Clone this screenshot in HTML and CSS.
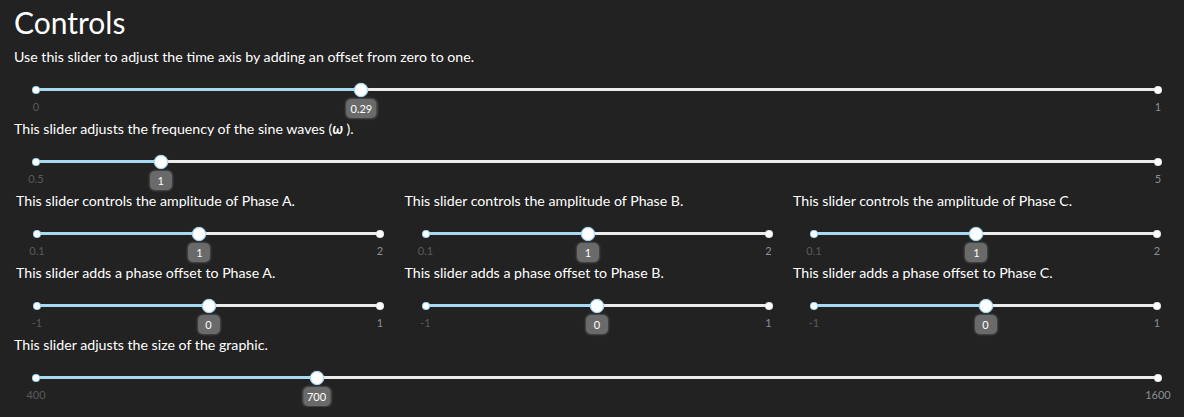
FILE: index.html
```html
<!DOCTYPE html>
<html>
<head>
<meta charset="utf-8">
<title>Controls</title>
<link rel="stylesheet" href="styles.css">
</head>
<body>
<div class="page">
  <h1 class="title">Controls</h1>

  <div class="block">
    <div class="label">Use this slider to adjust the time axis by adding an offset from zero to one.</div>
    <div class="slider wide">
      <div class="track"><div class="fill" style="width:29%"></div><span class="dot dot-l"></span><span class="dot dot-r"></span><span class="thumb" style="left:29%"></span></div>
      <div class="scale"><span class="min">0</span><span class="max">1</span></div>
      <span class="badge" style="left:29%">0.29</span>
    </div>
  </div>

  <div class="block">
    <div class="label">This slider adjusts the frequency of the sine waves (<b class="omega">ω</b> ).</div>
    <div class="slider wide">
      <div class="track"><div class="fill" style="width:11.11%"></div><span class="dot dot-l"></span><span class="dot dot-r"></span><span class="thumb" style="left:11.11%"></span></div>
      <div class="scale"><span class="min">0.5</span><span class="max">5</span></div>
      <span class="badge" style="left:11.11%">1</span>
    </div>
  </div>

  <div class="cols">
    <div class="block">
      <div class="label">This slider controls the amplitude of Phase A.</div>
      <div class="slider narrow">
        <div class="track"><div class="fill" style="width:47.37%"></div><span class="dot dot-l"></span><span class="dot dot-r"></span><span class="thumb" style="left:47.37%"></span></div>
        <div class="scale"><span class="min">0.1</span><span class="max">2</span></div>
        <span class="badge" style="left:47.37%">1</span>
      </div>
    </div>
    <div class="block">
      <div class="label">This slider controls the amplitude of Phase B.</div>
      <div class="slider narrow">
        <div class="track"><div class="fill" style="width:47.37%"></div><span class="dot dot-l"></span><span class="dot dot-r"></span><span class="thumb" style="left:47.37%"></span></div>
        <div class="scale"><span class="min">0.1</span><span class="max">2</span></div>
        <span class="badge" style="left:47.37%">1</span>
      </div>
    </div>
    <div class="block">
      <div class="label">This slider controls the amplitude of Phase C.</div>
      <div class="slider narrow">
        <div class="track"><div class="fill" style="width:47.37%"></div><span class="dot dot-l"></span><span class="dot dot-r"></span><span class="thumb" style="left:47.37%"></span></div>
        <div class="scale"><span class="min">0.1</span><span class="max">2</span></div>
        <span class="badge" style="left:47.37%">1</span>
      </div>
    </div>

    <div class="block">
      <div class="label">This slider adds a phase offset to Phase A.</div>
      <div class="slider narrow">
        <div class="track"><div class="fill" style="width:50%"></div><span class="dot dot-l"></span><span class="dot dot-r"></span><span class="thumb" style="left:50%"></span></div>
        <div class="scale"><span class="min">-1</span><span class="max">1</span></div>
        <span class="badge" style="left:50%">0</span>
      </div>
    </div>
    <div class="block">
      <div class="label">This slider adds a phase offset to Phase B.</div>
      <div class="slider narrow">
        <div class="track"><div class="fill" style="width:50%"></div><span class="dot dot-l"></span><span class="dot dot-r"></span><span class="thumb" style="left:50%"></span></div>
        <div class="scale"><span class="min">-1</span><span class="max">1</span></div>
        <span class="badge" style="left:50%">0</span>
      </div>
    </div>
    <div class="block">
      <div class="label">This slider adds a phase offset to Phase C.</div>
      <div class="slider narrow">
        <div class="track"><div class="fill" style="width:50%"></div><span class="dot dot-l"></span><span class="dot dot-r"></span><span class="thumb" style="left:50%"></span></div>
        <div class="scale"><span class="min">-1</span><span class="max">1</span></div>
        <span class="badge" style="left:50%">0</span>
      </div>
    </div>
  </div>

  <div class="block">
    <div class="label">This slider adjusts the size of the graphic.</div>
    <div class="slider wide">
      <div class="track"><div class="fill" style="width:25%"></div><span class="dot dot-l"></span><span class="dot dot-r"></span><span class="thumb" style="left:25%"></span></div>
      <div class="scale"><span class="min">400</span><span class="max">1600</span></div>
      <span class="badge" style="left:25%">700</span>
    </div>
  </div>
</div>
</body>
</html>
```

FILE: styles.css
```css
html, body {
  margin: 0;
  padding: 0;
  background: #222222;
}

body {
  font-family: Lato, "Noto Sans", sans-serif;
  color: #ffffff;
  overflow: hidden;
}

.page {
  padding: 0 14px;
}

.title {
  font-size: 30px;
  font-weight: 400;
  line-height: 36px;
  margin: 4px 0 7px 0;
}

.block {
  height: 72px;
}

.label {
  font-size: 14.2px;
  line-height: 20px;
  height: 20px;
  white-space: nowrap;
}

.omega {
  font-style: italic;
  font-weight: 700;
}

.slider {
  position: relative;
  height: 52px;
  padding-top: 21px;
  box-sizing: border-box;
}

.slider.wide {
  margin: 0 12px 0 22px;
}

.cols {
  display: grid;
  grid-template-columns: repeat(3, 388.5px);
  margin-left: 2px;
}

.slider.narrow {
  margin-left: 21px;
  width: 343px;
}

.track {
  position: relative;
  height: 3px;
  background: #ececec;
}

.fill {
  height: 100%;
  background: #a6dbf3;
}

.dot {
  position: absolute;
  top: 50%;
  width: 6px;
  height: 6px;
  margin-top: -3px;
  border-radius: 50%;
  background: #ffffff;
}

.dot-l {
  left: -3px;
  box-shadow: 0 0 0 1px #a6dbf3;
}

.dot-r {
  right: -3px;
  box-shadow: 0 0 0 1px #ececec;
}

.thumb {
  position: absolute;
  top: 50%;
  width: 12px;
  height: 12px;
  margin: -7px 0 0 -7px;
  border: 1px solid #a6dbf3;
  border-radius: 50%;
  background: #ffffff;
  box-shadow: 0 0 1px #a6dbf3;
}

.scale {
  display: flex;
  justify-content: space-between;
  margin-top: 9px;
  font-size: 11px;
  line-height: 13px;
}

.min {
  color: #5a5a5a;
  transform: translateX(-50%);
}

.max {
  color: #8a8f96;
  transform: translateX(50%);
}

.badge {
  position: absolute;
  top: 32px;
  min-width: 22px;
  height: 19px;
  padding: 0 4px;
  box-sizing: border-box;
  transform: translateX(-50%);
  border-radius: 5px;
  background: #6a6a6a;
  box-shadow: 0 0 2px 1px rgba(110, 110, 110, 0.55);
  color: #ffffff;
  font-size: 11px;
  line-height: 19px;
  text-align: center;
}
```
